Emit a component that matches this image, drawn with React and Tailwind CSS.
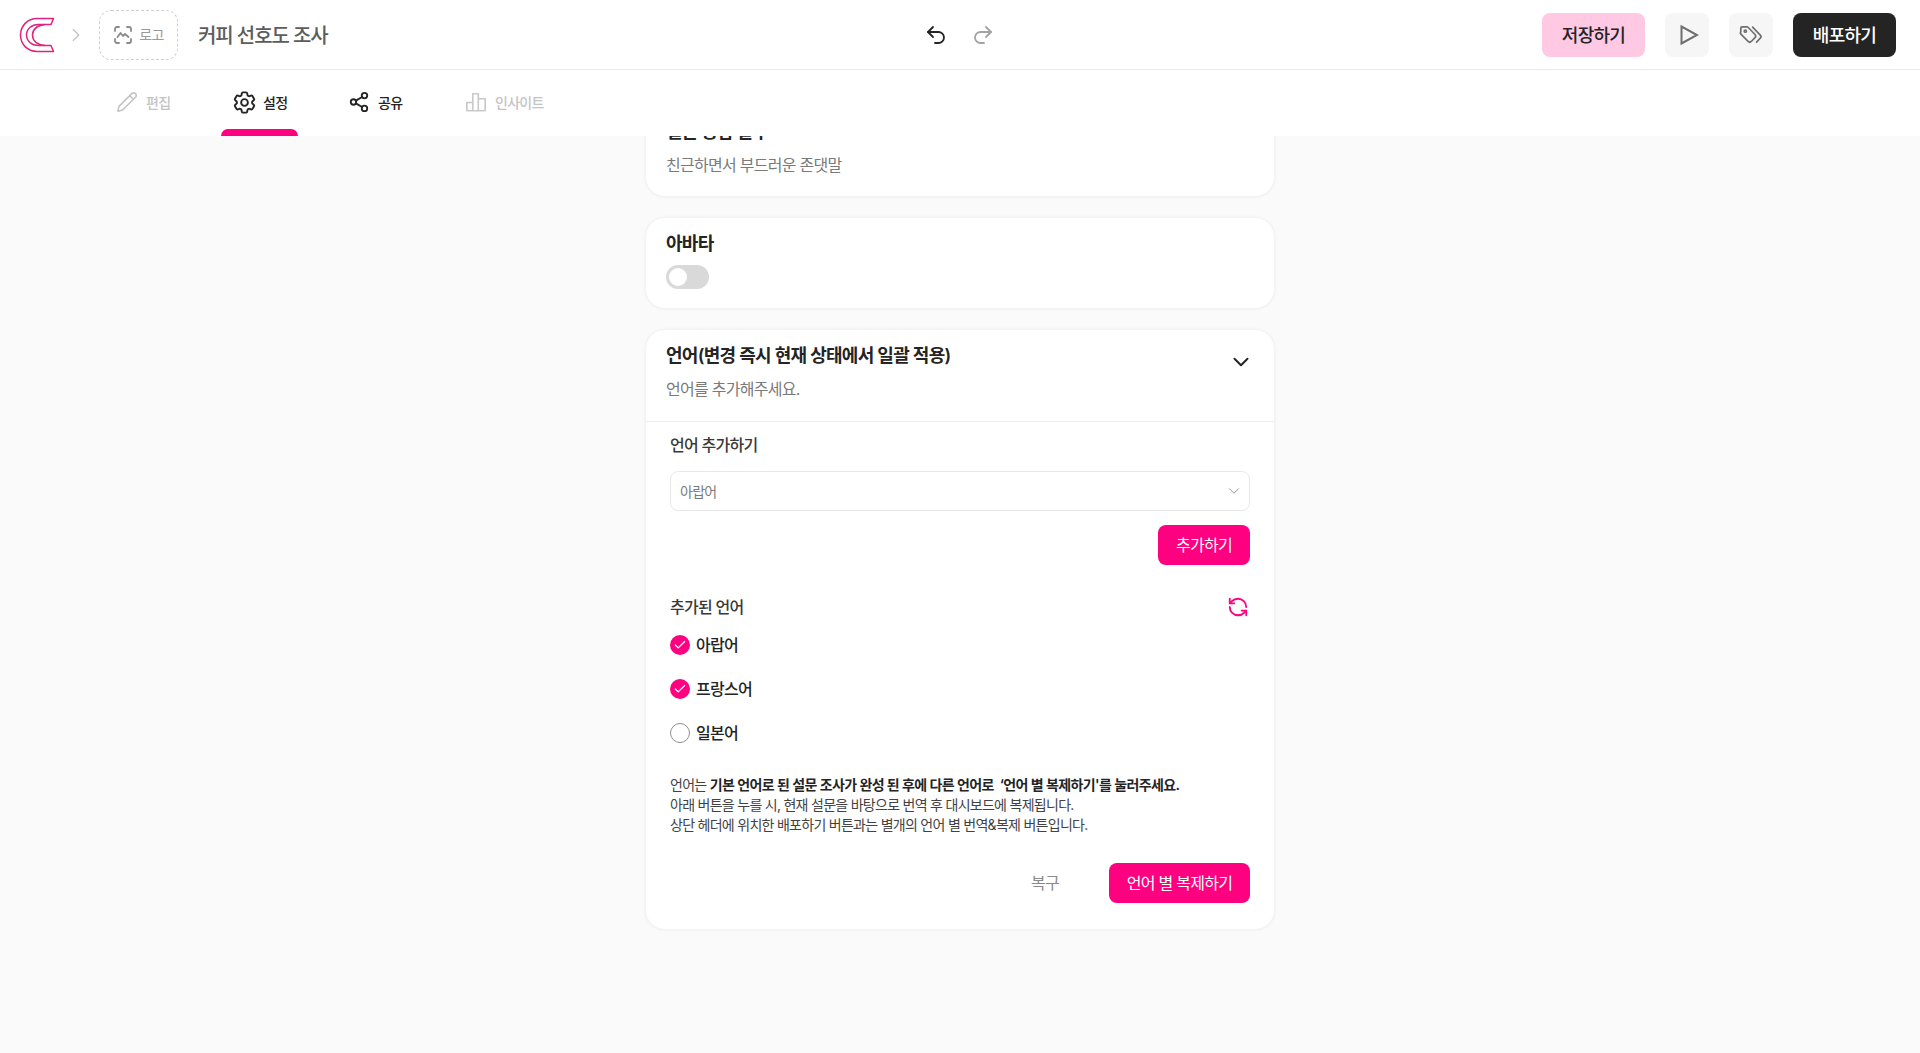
import React from 'react';
import { Pencil, Undo2, Redo2, RefreshCcw, ChevronDown, ChevronRight, Check, Share2 } from 'lucide-react';
import { HiOutlineCog6Tooth } from 'react-icons/hi2';

const Logo = () => (
    <svg width="36" height="36" viewBox="0 0 36 36" fill="none" stroke="#e0247e" strokeWidth="1.5" strokeLinejoin="round">
        <path d="M34.5 1.5H18C8.5 1.5 1.5 9 1.5 18S8.5 34.5 18 34.5H34.5L32 28.5H19.5C12.5 28.5 7.5 24 7.5 18S12.5 7.5 19.5 7.5H32Z" />
        <path d="M26 7.5C18 8.5 13.5 12.5 13.5 18S18 27.5 26 28.5" />
    </svg>
);

const LogoPlaceholderIcon = () => (
    <svg width="20" height="20" viewBox="0 0 20 20" fill="none" stroke="#8a8a8a" strokeWidth="1.8" strokeLinecap="round" strokeLinejoin="round">
        <path d="M2 6V4a2 2 0 0 1 2-2h2M14 2h2a2 2 0 0 1 2 2v2M18 14v2a2 2 0 0 1-2 2h-2M6 18H4a2 2 0 0 1-2-2v-2" />
        <path d="M4.5 12l3-4 2.5 3 2-2 3.5 3" />
    </svg>
);

const PlayIcon = () => (
    <svg width="20" height="24" viewBox="0 0 20 24" fill="none" stroke="#6f6f6f" strokeWidth="2" strokeLinejoin="miter">
        <path d="M2.5 3.5V20.5L18 12Z" />
    </svg>
);

const TagsIcon = () => (
    <svg width="27" height="27" viewBox="0 0 24 24" fill="none" stroke="#6f6f6f" strokeWidth="1.5" strokeLinecap="round" strokeLinejoin="round">
        <path d="M2.5 9.5V6.2a1 1 0 0 1 1-1h4.2a2 2 0 0 1 1.4.6l6 6.2a2 2 0 0 1 0 2.8l-3.3 3.4a2 2 0 0 1-2.8 0l-6-6.1a2 2 0 0 1-.5-2.6Z" />
        <path d="M13 5.5l6.8 7a2 2 0 0 1 0 2.8l-3.3 3.4" />
        <circle cx="6.5" cy="9" r="1" />
    </svg>
);

const ChartIcon = () => (
    <svg width="26" height="26" viewBox="0 0 24 24" fill="none" stroke="#c9c9c9" strokeWidth="1.8" strokeLinejoin="round">
        <path d="M2 12.5h6.5v9H2zM8.5 3h6v18.5h-6zM14.5 8.5H22v13h-7.5z" />
    </svg>
);

const Tab = ({ icon, label, active, dim, width }) => (
    <div className={`relative h-full flex items-center gap-2 pl-3 pb-[2px] text-[14px] font-medium ${width} ${dim ? 'text-[#c4c4c4]' : 'text-[#242424]'}`}>
        <span className="w-[22px] flex items-center justify-center">{icon}</span>
        <span>{label}</span>
        {active && <div className="absolute left-0 right-0 bottom-0 h-[7px] rounded-t-lg bg-[#ff0080]" />}
    </div>
);

const LangRow = ({ label, checked }) => (
    <div className="h-6 flex items-center gap-[6px]">
        {checked ? (
            <div className="w-5 h-5 rounded-full bg-[#ff0080] flex items-center justify-center">
                <Check size={14} strokeWidth={2.2} className="text-white" />
            </div>
        ) : (
            <div className="w-5 h-5 rounded-full border border-[#8f8f8f] bg-white" />
        )}
        <span className="text-[16px] font-medium text-[#242424]">{label}</span>
    </div>
);

const Card = ({ className, children }) => (
    <div className={`bg-white rounded-[20px] border border-[#f3f3f3] shadow-[0_0_3px_rgba(0,0,0,0.06)] ${className}`}>
        {children}
    </div>
);

export default function App() {
    return (
        <div className="h-screen flex flex-col overflow-hidden bg-[#fafafa] tracking-[-0.045em] font-['Inter','Noto_Sans_CJK_KR',sans-serif]">
            <header className="relative h-[70px] shrink-0 bg-white border-b border-[#e8e8e8] flex items-center pl-[19px] pr-6">
                <Logo />
                <ChevronRight size={22} strokeWidth={1.5} className="ml-[10px] text-[#c4c4c4]" />
                <div className="ml-3 w-[79px] h-[50px] rounded-xl border border-dashed border-[#cfcfcf] flex items-center justify-center gap-[6px] text-[14px] text-[#9a9a9a]">
                    <LogoPlaceholderIcon />
                    <span>로고</span>
                </div>
                <h1 className="ml-5 pt-[2px] text-[20px] font-medium text-[#5c5c5c] tracking-[-0.055em]">커피 선호도 조사</h1>

                {/* undo / redo sit in the middle of the header */}
                <div className="absolute left-[924px] top-[23px] flex items-center gap-[23px]">
                    <Undo2 size={24} strokeWidth={1.8} className="text-[#242424]" />
                    <Redo2 size={24} strokeWidth={1.8} className="text-[#a3a3a3]" />
                </div>

                <div className="ml-auto flex items-center gap-5">
                    <button className="w-[103px] h-[44px] pt-[2px] rounded-lg bg-[#ffc8e3] text-[18px] font-medium text-[#242424]">저장하기</button>
                    <button className="w-11 h-[44px] rounded-lg bg-[#f6f6f6] flex items-center justify-center pl-[3px]">
                        <PlayIcon />
                    </button>
                    <button className="w-11 h-[44px] rounded-lg bg-[#f6f6f6] flex items-center justify-center">
                        <TagsIcon />
                    </button>
                    <button className="w-[103px] h-[44px] pt-[2px] rounded-lg bg-[#242424] text-[18px] font-medium text-white">배포하기</button>
                </div>
            </header>

            <nav className="relative z-10 h-[66px] shrink-0 bg-white flex pl-[104px] gap-[38px]">
                <Tab dim width="w-[79px]" label="편집" icon={<Pencil size={22} strokeWidth={1.7} />} />
                <Tab active width="w-[77px]" label="설정" icon={<HiOutlineCog6Tooth size={27} strokeWidth={1.7} className="shrink-0" />} />
                <Tab width="w-[79px]" label="공유" icon={<Share2 size={24} strokeWidth={2} />} />
                <Tab dim width="w-[102px]" label="인사이트" icon={<ChartIcon />} />
            </nav>

            <main className="flex-1 overflow-hidden">
                <div className="w-[630px] mx-auto -mt-[31px] flex flex-col gap-5">
                    <Card className="h-[92px] px-5 pt-3">
                        <h3 className="text-[18px] leading-7 font-semibold text-[#242424]">질문 응답 말투</h3>
                        <p className="mt-[7px] text-[16px] leading-6 text-[#7a7a7a]">친근하면서 부드러운 존댓말</p>
                    </Card>

                    <Card className="h-[92px] px-5 pt-3">
                        <h3 className="text-[18px] leading-7 font-semibold text-[#242424]">아바타</h3>
                        <div className="mt-[7px] w-[43px] h-6 rounded-full bg-[#d9d9d9] flex items-center pl-[3px]">
                            <div className="w-[18px] h-[18px] rounded-full bg-white" />
                        </div>
                    </Card>

                    <Card>
                        <div className="relative px-5 pt-3 pb-5 border-b border-[#eeeeee]">
                            <h3 className="text-[18px] leading-7 font-semibold text-[#242424]">언어(변경 즉시 현재 상태에서 일괄 적용)</h3>
                            <p className="mt-[7px] text-[16px] leading-6 text-[#7a7a7a]">언어를 추가해주세요.</p>
                            <ChevronDown size={26} strokeWidth={1.8} className="absolute right-[20px] top-[19px] text-[#242424]" />
                        </div>

                        <div className="px-6 pt-[11px] pb-[26px]">
                            <div className="text-[16px] leading-6 font-medium text-[#3a3a3a]">언어 추가하기</div>
                            <div className="mt-[14px] h-10 rounded-lg border border-[#e8e8e8] flex items-center justify-between pl-[9px] pr-[6px] text-[14px] text-[#7a7a7a]">
                                <span>아랍어</span>
                                <ChevronDown size={18} strokeWidth={1.2} className="text-[#8a8a8a]" />
                            </div>
                            <div className="mt-[14px] flex justify-end">
                                <button className="w-[92px] h-10 rounded-lg bg-[#ff0080] text-[16px] text-white">추가하기</button>
                            </div>

                            <div className="mt-[30px] h-6 flex items-center justify-between pr-[1px]">
                                <span className="text-[16px] font-medium text-[#3a3a3a]">추가된 언어</span>
                                <RefreshCcw size={22} strokeWidth={2} className="text-[#ff0080]" />
                            </div>
                            <div className="mt-[14px] flex flex-col gap-5">
                                <LangRow checked label="아랍어" />
                                <LangRow checked label="프랑스어" />
                                <LangRow label="일본어" />
                            </div>

                            <p className="mt-[30px] text-[14px] leading-5 text-[#424242]">
                                언어는 <b className="font-semibold text-[#242424] tracking-[-0.043em]">기본 언어로 된 설문 조사가 완성 된 후에 다른 언어로 &nbsp;‘언어 별 복제하기'를 눌러주세요.</b>
                                <br />
                                아래 버튼을 누를 시, 현재 설문을 바탕으로 번역 후 대시보드에 복제됩니다.
                                <br />
                                상단 헤더에 위치한 배포하기 버튼과는 별개의 언어 별 번역&복제 버튼입니다.
                            </p>

                            <div className="mt-[28px] flex items-center justify-end">
                                <button className="mr-[50px] text-[16px] text-[#8a8a8a]">복구</button>
                                <button className="w-[141px] h-10 rounded-lg bg-[#ff0080] text-[16px] text-white">언어 별 복제하기</button>
                            </div>
                        </div>
                    </Card>
                </div>
            </main>
        </div>
    );
}
